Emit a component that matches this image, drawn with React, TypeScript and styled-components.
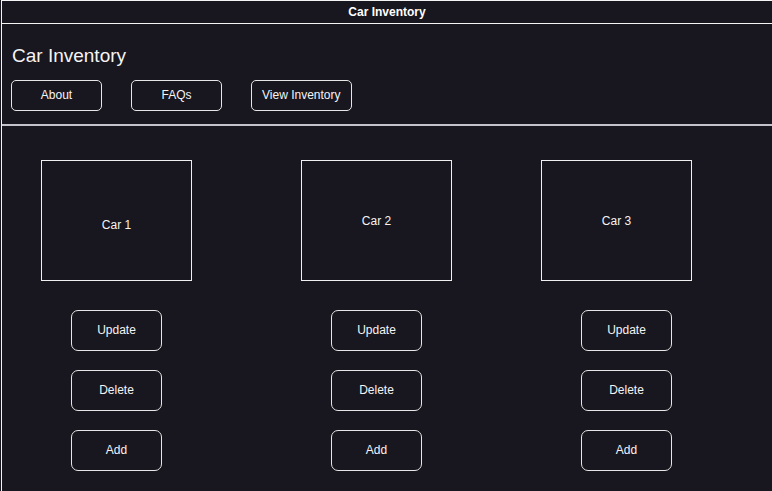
import * as React from 'react';
import styled, { createGlobalStyle } from 'styled-components';

const GlobalStyle = createGlobalStyle`
  html, body {
    margin: 0;
    padding: 0;
    background: #18161e;
  }
  body {
    font-family: "Liberation Sans", Arial, Helvetica, sans-serif;
    color: #f2f2f2;
  }
`;

const Frame = styled.div`
  margin-left: 1px;
  min-height: 491px;
  box-sizing: border-box;
  border-left: 1px solid #f4f4f4;
  border-top: 1px solid #f4f4f4;
  background: #18161e;
`;

const TitleBar = styled.div`
  height: 22px;
  display: flex;
  align-items: center;
  justify-content: center;
  border-bottom: 1px solid #f4f4f4;
  font-size: 12px;
  font-weight: 700;
  color: #ffffff;
`;

const Header = styled.header`
  padding: 20px 9px 13px;
  border-bottom: 2px solid #c4c3cc;
`;

const Heading = styled.h1`
  margin: 0 0 13px 1px;
  font-size: 19px;
  font-weight: 400;
  line-height: 23px;
  color: #f4f4f4;
`;

const Nav = styled.nav`
  display: flex;
  gap: 29px;
`;

const NavButton = styled.button`
  box-sizing: border-box;
  min-width: 91px;
  height: 31px;
  padding: 0 10px 1px;
  background: transparent;
  border: 1px solid #e6e6e6;
  border-radius: 5px;
  color: #f4f4f4;
  font-family: "Liberation Sans", Arial, Helvetica, sans-serif;
  font-size: 12px;
  cursor: pointer;
`;

const Cars = styled.section`
  display: flex;
  align-items: flex-start;
  padding: 34px 0 0 39px;
`;

const CarColumn = styled.div<{ $offset: number }>`
  display: flex;
  flex-direction: column;
  align-items: flex-start;
  margin-left: ${(p) => p.$offset}px;
`;

const CarBox = styled.div<{ $drop: number }>`
  box-sizing: border-box;
  width: 151px;
  height: 121px;
  display: flex;
  align-items: center;
  justify-content: center;
  padding-top: ${(p) => p.$drop}px;
  border: 1px solid #f0f0f0;
  font-size: 12px;
  color: #f4f4f4;
`;

const Actions = styled.div<{ $inset: number }>`
  display: flex;
  flex-direction: column;
  gap: 19px;
  margin-top: 29px;
  padding-left: ${(p) => p.$inset}px;
`;

const ActionButton = styled.button`
  box-sizing: border-box;
  width: 91px;
  height: 41px;
  padding: 0 0 1px;
  background: transparent;
  border: 1px solid #e6e6e6;
  border-radius: 7px;
  color: #f4f4f4;
  font-family: "Liberation Sans", Arial, Helvetica, sans-serif;
  font-size: 12px;
  cursor: pointer;
`;

const cars = [
  { label: 'Car 1', offset: 0, inset: 30, drop: 9 },
  { label: 'Car 2', offset: 109, inset: 30, drop: 0 },
  { label: 'Car 3', offset: 89, inset: 40, drop: 0 },
];

export default function App() {
  return (
    <>
      <GlobalStyle />
      <Frame>
        <TitleBar>Car Inventory</TitleBar>
        <Header>
          <Heading>Car Inventory</Heading>
          <Nav>
            <NavButton>About</NavButton>
            <NavButton>FAQs</NavButton>
            <NavButton>View Inventory</NavButton>
          </Nav>
        </Header>
        <Cars>
          {cars.map((car) => (
            <CarColumn key={car.label} $offset={car.offset}>
              <CarBox $drop={car.drop}>{car.label}</CarBox>
              <Actions $inset={car.inset}>
                <ActionButton>Update</ActionButton>
                <ActionButton>Delete</ActionButton>
                <ActionButton>Add</ActionButton>
              </Actions>
            </CarColumn>
          ))}
        </Cars>
      </Frame>
    </>
  );
}
